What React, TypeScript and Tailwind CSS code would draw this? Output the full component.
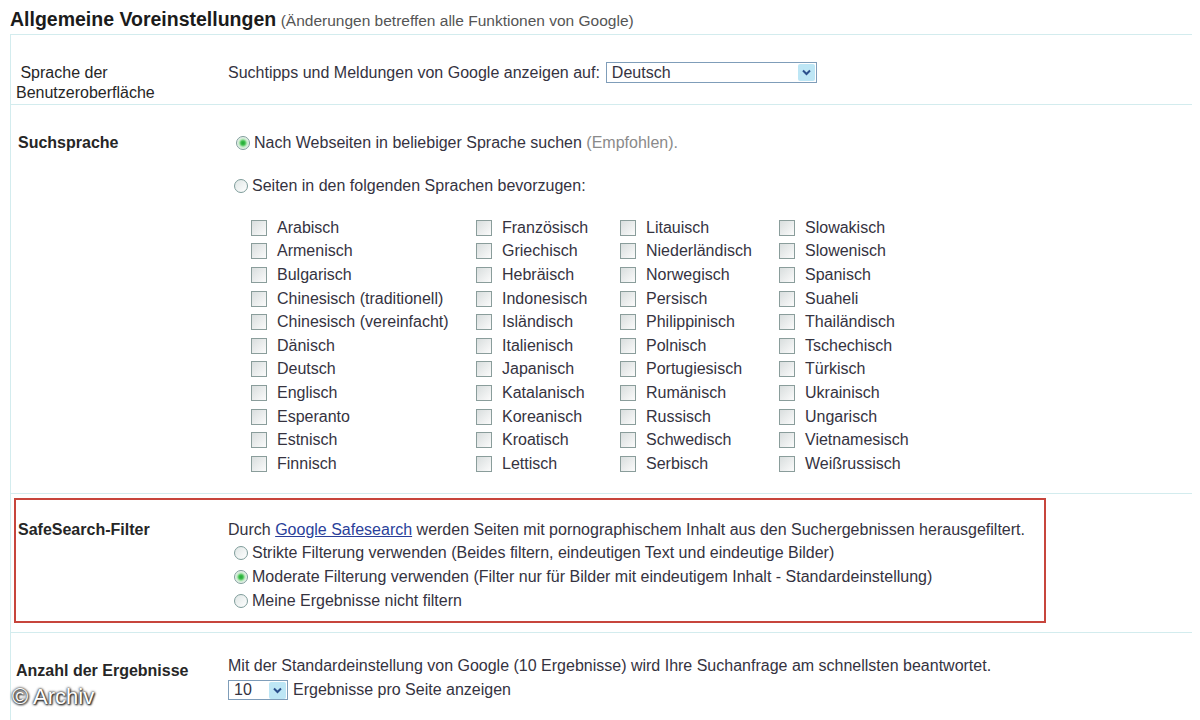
const col1 = ['Arabisch', 'Armenisch', 'Bulgarisch', 'Chinesisch (traditionell)', 'Chinesisch (vereinfacht)', 'Dänisch', 'Deutsch', 'Englisch', 'Esperanto', 'Estnisch', 'Finnisch'];
const col2 = ['Französisch', 'Griechisch', 'Hebräisch', 'Indonesisch', 'Isländisch', 'Italienisch', 'Japanisch', 'Katalanisch', 'Koreanisch', 'Kroatisch', 'Lettisch'];
const col3 = ['Litauisch', 'Niederländisch', 'Norwegisch', 'Persisch', 'Philippinisch', 'Polnisch', 'Portugiesisch', 'Rumänisch', 'Russisch', 'Schwedisch', 'Serbisch'];
const col4 = ['Slowakisch', 'Slowenisch', 'Spanisch', 'Suaheli', 'Thailändisch', 'Tschechisch', 'Türkisch', 'Ukrainisch', 'Ungarisch', 'Vietnamesisch', 'Weißrussisch'];

function Radio({ checked = false }: { checked?: boolean }) {
  return (
    <span
      className={`inline-block w-[14px] h-[14px] rounded-full border border-[#7e9c9a] shrink-0 ${
        checked
          ? 'bg-[radial-gradient(circle,#1fa535_0,#3cbf4b_2px,#bfe9c3_4px,#eef3f2_6px)]'
          : 'bg-linear-to-br from-[#dfe6e5] to-white'
      }`}
    />
  );
}

function Checkbox() {
  return (
    <span className="inline-block w-[16px] h-[16px] border border-[#8a9d9b] bg-linear-to-br from-[#d9dede] to-[#fbfbfb] shrink-0" />
  );
}

function Chevron() {
  return (
    <span className="flex items-center justify-center w-[17px] h-[17px] bg-[#bde6f5] rounded-[2px]">
      <svg width="9" height="7" viewBox="0 0 9 7">
        <path d="M1 1.5 L4.5 5 L8 1.5" fill="none" stroke="#2b4f8c" strokeWidth="2" />
      </svg>
    </span>
  );
}

function LangColumn({ items, width }: { items: string[]; width: string }) {
  return (
    <div className={width}>
      {items.map((l) => (
        <div key={l} className="flex items-center h-[23.6px] gap-[10px]">
          <Checkbox />
          <span className="whitespace-nowrap">{l}</span>
        </div>
      ))}
    </div>
  );
}

export default function App() {
  return (
    <div
      className="relative w-[1200px] h-[720px] overflow-hidden bg-white text-[16px] leading-[20px] text-[#35333f]"
      style={{ fontFamily: '"Liberation Sans", Arial, sans-serif' }}
    >
      {/* Title */}
      <div className="h-[34px] pl-[10px] pt-[8px] leading-[22px] whitespace-nowrap">
        <span className="text-[19.5px] font-bold text-[#1b1b1b]">Allgemeine Voreinstellungen</span>{' '}
        <span className="text-[15.5px] text-[#555]">(Änderungen betreffen alle Funktionen von Google)</span>
      </div>

      <div className="ml-[10px] w-[1182px] border-l border-t border-[#d3ecee]">
        {/* Interface language */}
        <div className="flex h-[70px] border-b border-[#d3ecee] pt-[27px]">
          <div className="w-[217px] pl-[5px] mt-[1px] text-[#262626]">
            <div>&nbsp;Sprache der</div>
            <div>Benutzeroberfläche</div>
          </div>
          <div className="flex items-center h-[21px] gap-[6px]">
            <span>Suchtipps und Meldungen von Google anzeigen auf:</span>
            <div className="flex items-center justify-between w-[211px] h-[21px] border border-[#7f9db9] pl-[5px] pr-[1px] bg-white">
              <span>Deutsch</span>
              <Chevron />
            </div>
          </div>
        </div>

        {/* Search language */}
        <div className="flex h-[389px] border-b border-[#d3ecee] pt-[28px]">
          <div className="w-[217px] pl-[7px] font-bold text-[#262626]">Suchsprache</div>
          <div>
            <div className="flex items-center gap-[4px] pl-[8px]">
              <Radio checked />
              <span>
                Nach Webseiten in beliebiger Sprache suchen <span className="text-[#8a8a8a]">(Empfohlen).</span>
              </span>
            </div>
            <div className="flex items-center gap-[4px] pl-[6px] mt-[23px]">
              <Radio />
              <span>Seiten in den folgenden Sprachen bevorzugen:</span>
            </div>
            <div className="flex pl-[23px] mt-[20px]">
              <LangColumn items={col1} width="w-[225px]" />
              <LangColumn items={col2} width="w-[144px]" />
              <LangColumn items={col3} width="w-[159px]" />
              <LangColumn items={col4} width="w-[160px]" />
            </div>
          </div>
        </div>

        {/* SafeSearch */}
        <div className="h-[139px] border-b border-[#d3ecee] pt-[4px] pl-[3px]">
          <div className="flex w-[1032px] h-[125px] border-2 border-[#c7453c] pt-[20px]">
            <div className="w-[212px] pl-[2px] font-bold text-[#262626]">SafeSearch-Filter</div>
            <div>
              <div>
                Durch{' '}
                <span className="text-[#2a3f9a] underline">Google Safesearch</span>{' '}
                werden Seiten mit pornographischem Inhalt aus den Suchergebnissen herausgefiltert.
              </div>
              <div className="flex items-center gap-[4px] h-[24px] pl-[6px] mt-[1px]">
                <Radio />
                <span>Strikte Filterung verwenden (Beides filtern, eindeutigen Text und eindeutige Bilder)</span>
              </div>
              <div className="flex items-center gap-[4px] h-[24px] pl-[6px]">
                <Radio checked />
                <span>Moderate Filterung verwenden (Filter nur für Bilder mit eindeutigem Inhalt - Standardeinstellung)</span>
              </div>
              <div className="flex items-center gap-[4px] h-[24px] pl-[6px]">
                <Radio />
                <span>Meine Ergebnisse nicht filtern</span>
              </div>
            </div>
          </div>
        </div>

        {/* Number of results */}
        <div className="flex h-[100px] pt-[23px]">
          <div className="w-[217px] pl-[5px] mt-[5px] font-bold text-[#262626]">Anzahl der Ergebnisse</div>
          <div>
            <div>Mit der Standardeinstellung von Google (10 Ergebnisse) wird Ihre Suchanfrage am schnellsten beantwortet.</div>
            <div className="flex items-center gap-[5px] mt-[4px]">
              <div className="flex items-center justify-between w-[60px] h-[20px] border border-[#7f9db9] pl-[5px] pr-[1px]">
                <span>10</span>
                <Chevron />
              </div>
              <span>Ergebnisse pro Seite anzeigen</span>
            </div>
          </div>
        </div>
      </div>

      {/* Watermark */}
      <div className="absolute left-[12px] top-[685px] text-[22px] leading-[24px] text-white [text-shadow:0_0_2px_#333,0_0_3px_#333,1px_1px_2px_#000]">
        © Archiv
      </div>
    </div>
  );
}
